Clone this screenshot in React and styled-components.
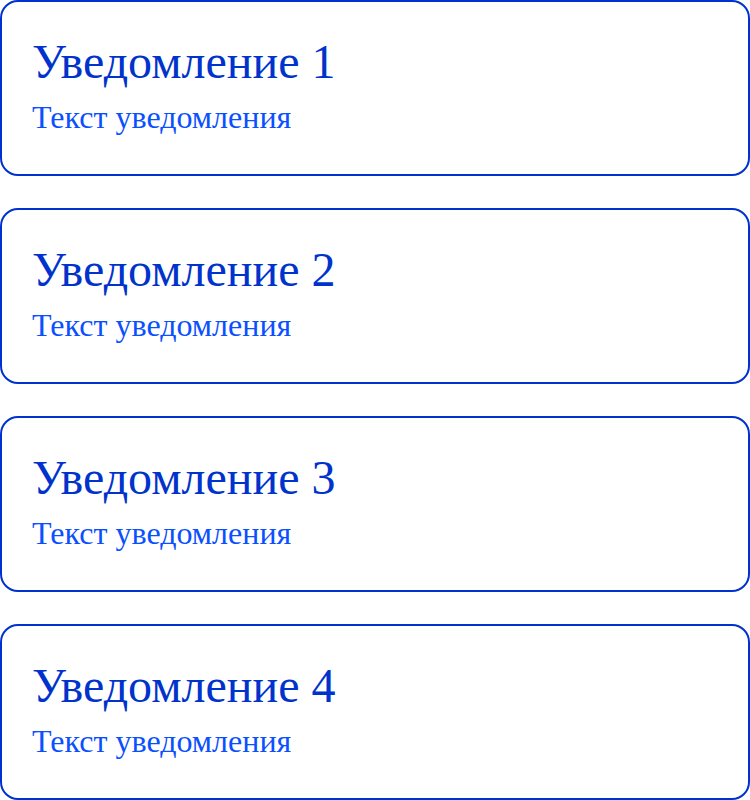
import React from "react";
import styled, { createGlobalStyle } from "styled-components";

const Global = createGlobalStyle`
  html, body { margin: 0; padding: 0; background: #ffffff; }
  body { font-family: "Liberation Serif", "Times New Roman", serif; }
`;

const List = styled.div`
  display: flex;
  flex-direction: column;
  gap: 32px;
  width: 750px;
`;

const Card = styled.div`
  box-sizing: border-box;
  height: 176px;
  border: 2px solid #0033cc;
  border-radius: 18px;
  padding: 32px 30px;
  display: flex;
  flex-direction: column;
`;

const Title = styled.div`
  font-size: 48px;
  line-height: 55px;
  color: #0033cc;
`;

const Text = styled.div`
  margin-top: 10px;
  font-size: 32px;
  line-height: 37px;
  color: #0a50ff;
`;

const items = [1, 2, 3, 4];

export default function App() {
  return (
    <>
      <Global />
      <List>
        {items.map((n) => (
          <Card key={n}>
            <Title>Уведомление {n}</Title>
            <Text>Текст уведомления</Text>
          </Card>
        ))}
      </List>
    </>
  );
}
